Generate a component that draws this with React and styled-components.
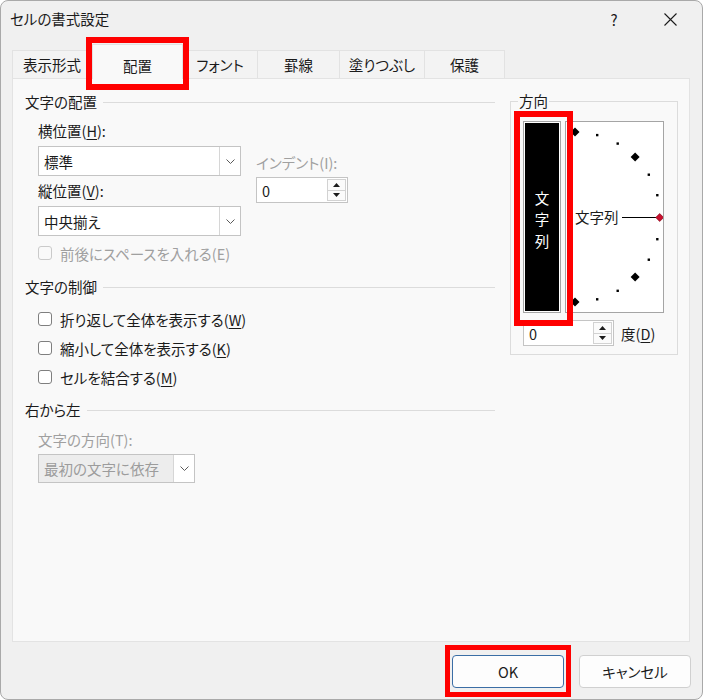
import React from 'react';
import styled, { createGlobalStyle } from 'styled-components';

const Global = createGlobalStyle`
  html, body { margin: 0; padding: 0; background: #ffffff; }
  body {
    font-family: "Noto Sans CJK JP", "Noto Sans", sans-serif;
    font-size: 14.5px;
    color: #1b1b1b;
    font-feature-settings: "palt";
  }
  * { box-sizing: border-box; }
`;

const Window = styled.div`
  width: 703px;
  height: 700px;
  background: #f0f0f0;
  border: 1px solid #a9a9a9;
  border-radius: 8px;
  display: flex;
  flex-direction: column;
  overflow: hidden;
`;

const TitleBar = styled.div`
  height: 39px;
  display: flex;
  align-items: center;
  padding: 0 0 3px 9px;
`;

const Title = styled.span`
  flex: 1;
  line-height: 20px;
`;

const TitleButton = styled.div`
  width: 46px;
  height: 30px;
  display: flex;
  align-items: center;
  justify-content: center;
  margin-right: ${p => p.$mr || 0}px;
  font-size: 15px;
`;

const TabRow = styled.div`
  height: 38px;
  display: flex;
  align-items: flex-end;
  padding-left: 11px;
`;

const Mark = styled.div`
  position: relative;
  display: flex;
  z-index: 3;
  &::after {
    content: '';
    position: absolute;
    top: ${p => p.$t}px;
    right: ${p => p.$r}px;
    bottom: ${p => p.$b}px;
    left: ${p => p.$l}px;
    border: ${p => p.$w || 6}px solid #ff0000;
    pointer-events: none;
  }
`;

const Tab = styled.div`
  width: ${p => p.$w}px;
  height: ${p => (p.$active ? 35 : 28)}px;
  margin-bottom: ${p => (p.$active ? -1 : 0)}px;
  padding-top: ${p => (p.$active ? 6 : 0)}px;
  display: flex;
  align-items: center;
  justify-content: center;
  background: ${p => (p.$active ? '#f9f9f9' : '#f3f3f3')};
  border-top: 1px solid #e2e2e2;
  border-right: 1px solid #e2e2e2;
  border-left: ${p => (p.$first || p.$active ? '1px solid #e2e2e2' : 'none')};
  position: relative;
  z-index: ${p => (p.$active ? 2 : 0)};
`;

const Panel = styled.div`
  height: 564px;
  margin: 0 12px 0 11px;
  background: #f9f9f9;
  border: 1px solid #e3e3e3;
  display: flex;
  align-items: flex-start;
  padding: 13px 0 0 12px;
`;

const LeftCol = styled.div`
  width: 470px;
  display: flex;
  flex-direction: column;
`;

const Section = styled.div`
  display: flex;
  align-items: center;
  height: 20px;
  margin-top: ${p => p.$mt || 0}px;
`;

const SectionTitle = styled.span`
  line-height: 20px;
`;

const Rule = styled.div`
  flex: 1;
  height: 1px;
  background: #dcdcdc;
  margin-left: 6px;
`;

const Indent = styled.div`
  padding-left: 13px;
  display: flex;
  flex-direction: column;
`;

const Label = styled.div`
  line-height: 20px;
  height: 20px;
  margin-top: ${p => p.$mt || 0}px;
  color: ${p => (p.$disabled ? '#a0a0a0' : '#1b1b1b')};
  white-space: nowrap;
`;

const Mn = styled.span`
  text-decoration: underline;
  text-underline-offset: 2px;
`;

const SelectGrid = styled.div`
  display: flex;
  align-items: flex-start;
  gap: 15px;
  margin-top: 9px;
`;

const Column = styled.div`
  display: flex;
  flex-direction: column;
  margin-top: ${p => p.$mt || 0}px;
`;

const SelectBox = styled.div`
  width: ${p => p.$w}px;
  height: ${p => p.$h || 30}px;
  margin-top: ${p => p.$mt || 0}px;
  display: flex;
  border: 1px solid #c4c4c4;
  background: ${p => (p.$disabled ? '#ededed' : '#ffffff')};
  color: ${p => (p.$disabled ? '#9c9c9c' : '#1b1b1b')};
`;

const SelectValue = styled.div`
  flex: 1;
  display: flex;
  align-items: center;
  padding-left: 5px;
`;

const DropButton = styled.div`
  width: 21px;
  border-left: 1px solid #d6d6d6;
  background: #ffffff;
  display: flex;
  align-items: center;
  justify-content: center;
`;

const SpinBox = styled.div`
  width: ${p => p.$w}px;
  height: 26px;
  margin-top: ${p => p.$mt || 0}px;
  display: flex;
  border: 1px solid #c4c4c4;
  background: #ffffff;
`;

const SpinValue = styled.div`
  flex: 1;
  display: flex;
  align-items: center;
  padding-left: 5px;
`;

const SpinButtons = styled.div`
  width: 19px;
  margin: 1px;
  display: flex;
  flex-direction: column;
`;

const SpinHalf = styled.div`
  flex: 1;
  border: 1px solid #d2d2d2;
  margin-top: ${p => (p.$down ? -1 : 0)}px;
  display: flex;
  align-items: center;
  justify-content: center;
  background: #fbfbfb;
`;

const CheckRow = styled.label`
  display: flex;
  align-items: center;
  gap: 8px;
  height: 20px;
  margin-top: ${p => p.$mt || 0}px;
  color: ${p => (p.$disabled ? '#a0a0a0' : '#1b1b1b')};
  white-space: nowrap;
`;

const Box = styled.span`
  width: 14px;
  height: 14px;
  border-radius: 3px;
  border: 1px solid ${p => (p.$disabled ? '#cacaca' : '#7f7f7f')};
  background: ${p => (p.$disabled ? '#f9f9f9' : '#ffffff')};
  flex: none;
`;

const Group = styled.fieldset`
  width: 168px;
  margin: -1px 0 0 15px;
  padding: 0 0 8px 0;
  border: 1px solid #dcdcdc;
  min-width: 0;
`;

const Legend = styled.legend`
  margin-left: 7px;
  padding: 0 1px;
  line-height: 20px;
`;

const OrientRow = styled.div`
  display: flex;
  gap: 4px;
  height: 192px;
  margin: 10px 0 0 12px;
`;

const TextBox = styled.div`
  width: 38px;
  height: 192px;
  border: 1px solid #a5a5a5;
  padding: 1px;
  background: #ffffff;
  display: flex;
`;

const BlackFill = styled.div`
  flex: 1;
  background: #000000;
  color: #ffffff;
  display: flex;
  flex-direction: column;
  align-items: center;
  justify-content: center;
  padding-top: 4px;
`;

const VChar = styled.span`
  line-height: 21.5px;
`;

const Dial = styled.div`
  width: 99px;
  height: 192px;
  border: 1px solid #a5a5a5;
  background: #ffffff;
  position: relative;
  display: flex;
  align-items: center;
  padding-left: 9px;
`;

const DialDrawing = styled.svg`
  position: absolute;
  top: 0;
  left: 0;
`;

const DialText = styled.span`
  position: relative;
  line-height: 20px;
`;

const DegreeRow = styled.div`
  display: flex;
  align-items: center;
  gap: 7px;
  margin: 7px 0 0 12px;
`;

const Footer = styled.div`
  flex: 1;
  display: flex;
  justify-content: flex-end;
  align-items: flex-start;
  gap: 15px;
  padding: 13px 11px 0 0;
`;

const Button = styled.button`
  width: 112px;
  height: 33px;
  border-radius: 4px;
  border: 1px solid ${p => (p.$primary ? '#3b6ea5' : '#d0d0d0')};
  background: #fdfdfd;
  font-family: inherit;
  font-size: 14.5px;
  font-feature-settings: "palt";
  color: #1b1b1b;
  padding: 0;
`;

const Chevron = () => (
  <svg width="9" height="5" viewBox="0 0 9 5">
    <polyline points="0.5,0.5 4.5,4.5 8.5,0.5" fill="none" stroke="#5a5a5a" strokeWidth="1" />
  </svg>
);

const Triangle = ({ down }) => (
  <svg width="7" height="4" viewBox="0 0 7 4">
    <polygon points={down ? '0,0 7,0 3.5,4' : '0,4 7,4 3.5,0'} fill="#1b1b1b" />
  </svg>
);

const Select = ({ w, h, mt, value, disabled }) => (
  <SelectBox $w={w} $h={h} $mt={mt} $disabled={disabled}>
    <SelectValue>{value}</SelectValue>
    <DropButton>
      <Chevron />
    </DropButton>
  </SelectBox>
);

const Spin = ({ w, mt, value }) => (
  <SpinBox $w={w} $mt={mt}>
    <SpinValue>{value}</SpinValue>
    <SpinButtons>
      <SpinHalf>
        <Triangle />
      </SpinHalf>
      <SpinHalf $down>
        <Triangle down />
      </SpinHalf>
    </SpinButtons>
  </SpinBox>
);

const DialSvg = () => {
  const cx = 9;
  const cy = 95;
  const r = 85;
  const marks = [];
  for (let a = -90; a <= 90; a += 15) {
    const rad = (a * Math.PI) / 180;
    const x = cx + r * Math.cos(rad);
    const y = cy - r * Math.sin(rad);
    if (a === 0) continue;
    if (a % 45 === 0) {
      marks.push(
        <polygon key={a} points={`${x},${y - 4.5} ${x + 4.5},${y} ${x},${y + 4.5} ${x - 4.5},${y}`} fill="#000" />
      );
    } else {
      marks.push(<rect key={a} x={x - 1} y={y - 1} width="2.4" height="2.4" fill="#000" />);
    }
  }
  return (
    <DialDrawing width="97" height="190" viewBox="0 0 97 190">
      {marks}
      <line x1="56" y1="95.5" x2="90" y2="95.5" stroke="#000" strokeWidth="1" />
      <polygon points="93.7,91.5 97.7,95.5 93.7,99.5 89.7,95.5" fill="#c8102e" stroke="#7a0010" strokeWidth="0.6" />
    </DialDrawing>
  );
};

const tabs = [
  { label: '表示形式', w: 80 },
  { label: '配置', w: 91, active: true },
  { label: 'フォント', w: 75 },
  { label: '罫線', w: 82 },
  { label: '塗りつぶし', w: 85 },
  { label: '保護', w: 80 },
];

export default function App() {
  return (
    <>
      <Global />
      <Window>
        <TitleBar>
          <Title>セルの書式設定</Title>
          <TitleButton $mr={10}>?</TitleButton>
          <TitleButton $mr={9}>
            <svg width="13" height="13" viewBox="0 0 13 13">
              <path d="M0.5 0.5 L12.5 12.5 M12.5 0.5 L0.5 12.5" stroke="#1b1b1b" strokeWidth="1.1" fill="none" />
            </svg>
          </TitleButton>
        </TitleBar>

        <TabRow>
          {tabs.map((t, i) =>
            t.active ? (
              <Mark key={t.label} $t={-7} $r={-6} $b={-12} $l={-6}>
                <Tab $w={t.w} $active>
                  {t.label}
                </Tab>
              </Mark>
            ) : (
              <Tab key={t.label} $w={t.w} $first={i === 0}>
                {t.label}
              </Tab>
            )
          )}
        </TabRow>

        <Panel>
          <LeftCol>
            <Section>
              <SectionTitle>文字の配置</SectionTitle>
              <Rule />
            </Section>
            <Indent>
              <SelectGrid>
                <Column>
                  <Label>
                    横位置(<Mn>H</Mn>):
                  </Label>
                  <Select w={203} mt={5} value="標準" />
                  <Label $mt={5}>
                    縦位置(<Mn>V</Mn>):
                  </Label>
                  <Select w={203} mt={5} value="中央揃え" />
                </Column>
                <Column $mt={32}>
                  <Label $disabled>インデント(I):</Label>
                  <Spin w={92} mt={4} value="0" />
                </Column>
              </SelectGrid>
              <CheckRow $mt={7} $disabled>
                <Box $disabled />
                前後にスペースを入れる(E)
              </CheckRow>
            </Indent>

            <Section $mt={14}>
              <SectionTitle>文字の制御</SectionTitle>
              <Rule />
            </Section>
            <Indent>
              <CheckRow $mt={12}>
                <Box />
                <span>
                  折り返して全体を表示する(<Mn>W</Mn>)
                </span>
              </CheckRow>
              <CheckRow $mt={9}>
                <Box />
                <span>
                  縮小して全体を表示する(<Mn>K</Mn>)
                </span>
              </CheckRow>
              <CheckRow $mt={9}>
                <Box />
                <span>
                  セルを結合する(<Mn>M</Mn>)
                </span>
              </CheckRow>
            </Indent>

            <Section $mt={13}>
              <SectionTitle>右から左</SectionTitle>
              <Rule />
            </Section>
            <Indent>
              <Label $mt={10} $disabled>
                文字の方向(T):
              </Label>
              <Select w={157} h={29} mt={4} value="最初の文字に依存" disabled />
            </Indent>
          </LeftCol>

          <Group>
            <Legend>方向</Legend>
            <OrientRow>
              <Mark $t={-10} $r={-12} $b={-13} $l={-9}>
                <TextBox>
                  <BlackFill>
                    <VChar>文</VChar>
                    <VChar>字</VChar>
                    <VChar>列</VChar>
                  </BlackFill>
                </TextBox>
              </Mark>
              <Dial>
                <DialSvg />
                <DialText>文字列</DialText>
              </Dial>
            </OrientRow>
            <DegreeRow>
              <Spin w={91} value="0" />
              <span>
                度(<Mn>D</Mn>)
              </span>
            </DegreeRow>
          </Group>
        </Panel>

        <Footer>
          <Mark $t={-10} $r={-7} $b={-9} $l={-7} $w={5}>
            <Button $primary>OK</Button>
          </Mark>
          <Button>キャンセル</Button>
        </Footer>
      </Window>
    </>
  );
}
